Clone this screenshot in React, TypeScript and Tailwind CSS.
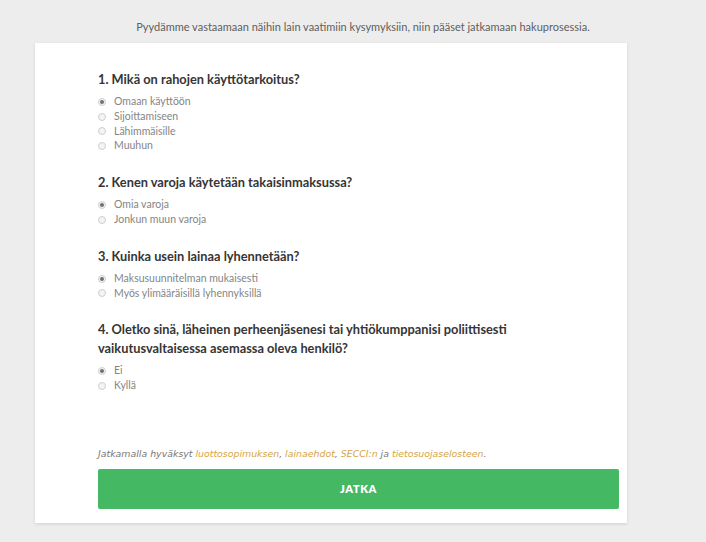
import { useState } from 'react'

type Question = {
  id: string
  title: string
  options: string[]
}

const questions: Question[] = [
  {
    id: 'q1',
    title: '1. Mikä on rahojen käyttötarkoitus?',
    options: ['Omaan käyttöön', 'Sijoittamiseen', 'Lähimmäisille', 'Muuhun'],
  },
  {
    id: 'q2',
    title: '2. Kenen varoja käytetään takaisinmaksussa?',
    options: ['Omia varoja', 'Jonkun muun varoja'],
  },
  {
    id: 'q3',
    title: '3. Kuinka usein lainaa lyhennetään?',
    options: ['Maksusuunnitelman mukaisesti', 'Myös ylimääräisillä lyhennyksillä'],
  },
  {
    id: 'q4',
    title: '4. Oletko sinä, läheinen perheenjäsenesi tai yhtiökumppanisi poliittisesti vaikutusvaltaisessa asemassa oleva henkilö?',
    options: ['Ei', 'Kyllä'],
  },
]

function Radio({ checked }: { checked: boolean }) {
  return (
    <span className="flex h-[8px] w-[8px] shrink-0 items-center justify-center rounded-full border border-[#cfcfcf] bg-[#f4f4f4]">
      {checked && <span className="h-[4px] w-[4px] rounded-full bg-[#707070]" />}
    </span>
  )
}

export default function App() {
  const [answers, setAnswers] = useState<Record<string, number>>({ q1: 0, q2: 0, q3: 0, q4: 0 })

  return (
    <div className="min-h-[542px] w-full bg-[#ededed] pt-[20px] font-['Lato',sans-serif]">
      <p className="pl-[20px] text-center text-[11px] leading-[13px] text-[#5e5e5e]">
        Pyydämme vastaamaan näihin lain vaatimiin kysymyksiin, niin pääset jatkamaan hakuprosessia.
      </p>

      <div className="ml-[35px] mt-[10px] flex h-[480px] w-[592px] flex-col bg-white pb-[14px] pl-[63px] pr-[8px] pt-[27px] shadow-[0_1px_3px_rgba(0,0,0,0.12)]">
        <div className="flex flex-col gap-[19.5px] pr-[90px]">
          {questions.map((q) => (
            <div key={q.id}>
              <h3 className="text-[12.8px] font-bold leading-[18.5px] text-[#353535]">{q.title}</h3>
              <ul className="mt-[6px]">
                {q.options.map((opt, i) => (
                  <li
                    key={opt}
                    className="flex h-[14.8px] cursor-pointer items-center gap-[8px] text-[10.5px] text-[#858585]"
                    onClick={() => setAnswers({ ...answers, [q.id]: i })}
                  >
                    <Radio checked={answers[q.id] === i} />
                    <span>{opt}</span>
                  </li>
                ))}
              </ul>
            </div>
          ))}
        </div>

        <p className="mt-auto font-['DejaVu_Sans',sans-serif] text-[9.4px] italic leading-[12px] text-[#777]">
          Jatkamalla hyväksyt <span className="text-[#d6a444]">luottosopimuksen</span>,{' '}
          <span className="text-[#d6a444]">lainaehdot</span>, <span className="text-[#d6a444]">SECCI:n</span> ja{' '}
          <span className="text-[#d6a444]">tietosuojaselosteen</span>.
        </p>
        <button className="mt-[9px] flex h-[40px] w-full items-center justify-center rounded-[2px] bg-[#45b864] text-[11px] font-extrabold tracking-[0.6px] text-white">
          JATKA
        </button>
      </div>
    </div>
  )
}
